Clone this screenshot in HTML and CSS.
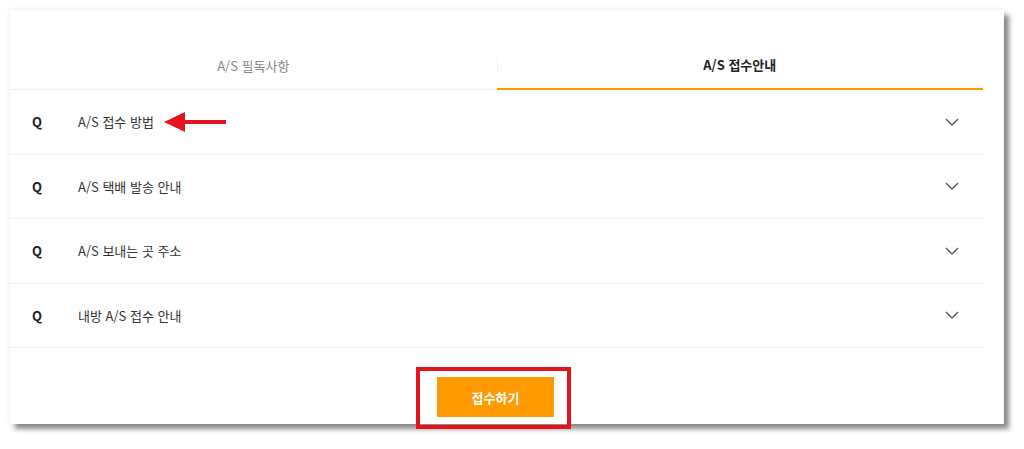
FILE: index.html
```html
<!DOCTYPE html>
<html lang="ko">
<head>
    <meta charset="UTF-8">
    <meta name="viewport" content="width=device-width, initial-scale=1.0">
    <title>A/S 접수안내</title>
    <link rel="stylesheet" href="styles.css">
</head>
<body>
<div class="card">
    <div class="tabs">
        <div class="tab">A/S 필독사항</div>
        <div class="tab active">A/S 접수안내</div>
    </div>

    <ul class="faq">
        <li class="faq-item">
            <span class="q">Q</span>
            <span class="title">A/S 접수 방법</span>
            <svg class="arrow" width="62" height="22" viewBox="0 0 62 22">
                <polygon points="0,11 21,1 21,21" fill="#e3141b"/>
                <rect x="20" y="9" width="42" height="4" fill="#e3141b"/>
            </svg>
            <svg class="chevron" width="14" height="8" viewBox="0 0 14 8">
                <polyline points="1,1 7,7 13,1" fill="none" stroke="#555" stroke-width="1.3"/>
            </svg>
        </li>
        <li class="faq-item">
            <span class="q">Q</span>
            <span class="title">A/S 택배 발송 안내</span>
            <svg class="chevron" width="14" height="8" viewBox="0 0 14 8">
                <polyline points="1,1 7,7 13,1" fill="none" stroke="#555" stroke-width="1.3"/>
            </svg>
        </li>
        <li class="faq-item">
            <span class="q">Q</span>
            <span class="title">A/S 보내는 곳 주소</span>
            <svg class="chevron" width="14" height="8" viewBox="0 0 14 8">
                <polyline points="1,1 7,7 13,1" fill="none" stroke="#555" stroke-width="1.3"/>
            </svg>
        </li>
        <li class="faq-item">
            <span class="q">Q</span>
            <span class="title">내방 A/S 접수 안내</span>
            <svg class="chevron" width="14" height="8" viewBox="0 0 14 8">
                <polyline points="1,1 7,7 13,1" fill="none" stroke="#555" stroke-width="1.3"/>
            </svg>
        </li>
    </ul>

    <div class="actions">
        <div class="highlight">
            <button class="submit">접수하기</button>
        </div>
    </div>
</div>
</body>
</html>
```

FILE: styles.css
```css
body {
    margin: 0;
    padding: 10px;
    background: #fff;
    font-family: "Noto Sans CJK KR", "Noto Sans", sans-serif;
    color: #333;
}

.card {
    width: 994px;
    height: 414px;
    box-sizing: border-box;
    padding: 31px 21px 0 0;
    background: #fff;
    box-shadow: 5px 5px 5px rgba(0, 0, 0, 0.45), 0 0 6px rgba(0, 0, 0, 0.08);
}

.tabs {
    display: flex;
}

.tab {
    flex: 1;
    height: 48px;
    display: flex;
    align-items: center;
    justify-content: center;
    font-size: 13px;
    color: #888;
    border-bottom: 1px solid #eee;
    position: relative;
}

.tab.active {
    color: #222;
    font-weight: bold;
    height: 47px;
    border-bottom: 2px solid #f90;
}

.tab.active::before {
    content: "";
    position: absolute;
    left: 0;
    top: 17px;
    height: 14px;
    border-left: 1px solid #f0f0f0;
}

.faq {
    list-style: none;
    margin: 0;
    padding: 0;
}

.faq-item {
    height: 63.5px;
    display: flex;
    align-items: center;
    border-bottom: 1px solid #f1f1f1;
    font-size: 13px;
    color: #333;
}

.q {
    width: 46px;
    padding-left: 22px;
    font-weight: bold;
    color: #222;
}

.title {
    flex: none;
}

.arrow {
    margin-left: 10px;
}

.chevron {
    margin-left: auto;
    margin-right: 24px;
}

.actions {
    display: flex;
    justify-content: center;
    padding-top: 19px;
}

.highlight {
    border: 4px solid #e3141b;
    padding: 6px 13px 8px 17px;
    margin-right: 6px;
}

.submit {
    display: block;
    width: 117px;
    height: 40px;
    border: 0;
    background: #ff9a00;
    color: #fff;
    font-family: inherit;
    font-size: 13px;
    font-weight: bold;
}
```
